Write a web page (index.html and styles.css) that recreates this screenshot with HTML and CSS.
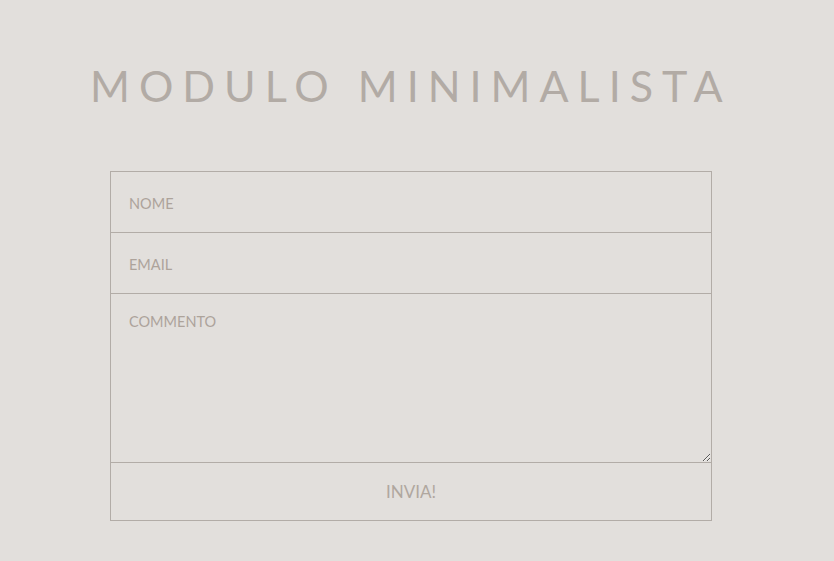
FILE: index.html
```html
<!DOCTYPE html>
<html lang="it">
<head>
    <meta charset="UTF-8">
    <meta name="viewport" content="width=device-width, initial-scale=1.0">
    <title>Modulo Minimalista</title>
    <link rel="stylesheet" href="styles.css">
</head>
<body>
    <div class="container">
        <h1>Modulo Minimalista</h1>
        <form class="contact-form">
            <input type="text" placeholder="NOME">
            <input type="email" placeholder="EMAIL">
            <textarea placeholder="COMMENTO"></textarea>
            <button type="submit">INVIA!</button>
        </form>
    </div>
</body>
</html>
```

FILE: styles.css
```css
* {
    margin: 0;
    padding: 0;
    box-sizing: border-box;
    font-family: Lato, 'Open Sans', sans-serif;
}

body {
    background: #e2dfdc;
    min-height: 100vh;
}

.container {
    padding-top: 62px;
}

h1 {
    color: #b2aba5;
    font-weight: 400;
    font-size: 43px;
    letter-spacing: 9px;
    text-transform: uppercase;
    white-space: nowrap;
    margin-left: 90px;
    line-height: 48px;
}

.contact-form {
    display: flex;
    flex-direction: column;
    width: 602px;
    margin: 61px 0 0 110px;
}

.contact-form input,
.contact-form textarea,
.contact-form button {
    display: block;
    width: 100%;
    background: transparent;
    border: 1px solid #b2aca7;
    margin-top: -1px;
    color: #a89f98;
    font-size: 14.5px;
    outline: none;
}

.contact-form input:first-child {
    margin-top: 0;
}

.contact-form input {
    height: 62px;
    padding: 2px 18px 0;
}

.contact-form textarea {
    height: 170px;
    padding: 19px 18px;
}

.contact-form ::placeholder {
    color: #ada39b;
}

.contact-form button {
    height: 59px;
    font-size: 17px;
    color: #b0a79f;
    cursor: pointer;
}
```
